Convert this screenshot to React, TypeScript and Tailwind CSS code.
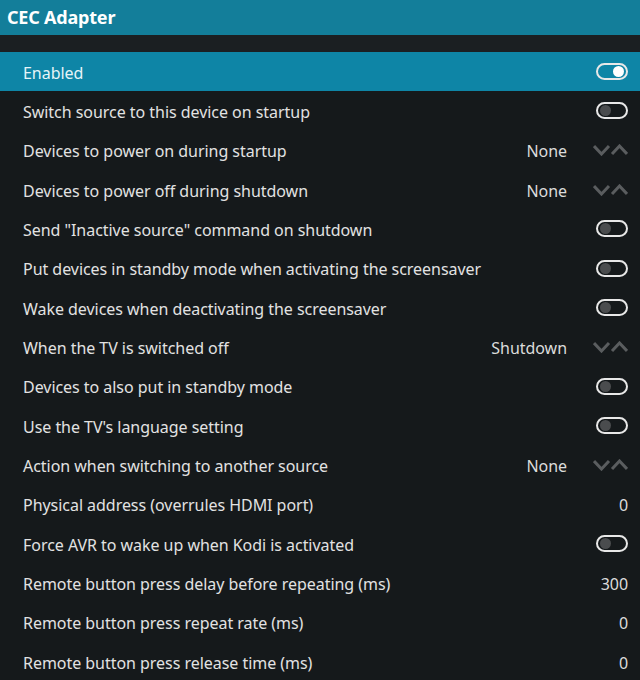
import React from 'react'

type Row = {
  label: string
  kind: 'toggle' | 'list' | 'value'
  on?: boolean
  value?: string
}

const rows: Row[] = [
  { label: 'Enabled', kind: 'toggle', on: true },
  { label: 'Switch source to this device on startup', kind: 'toggle' },
  { label: 'Devices to power on during startup', kind: 'list', value: 'None' },
  { label: 'Devices to power off during shutdown', kind: 'list', value: 'None' },
  { label: 'Send "Inactive source" command on shutdown', kind: 'toggle' },
  { label: 'Put devices in standby mode when activating the screensaver', kind: 'toggle' },
  { label: 'Wake devices when deactivating the screensaver', kind: 'toggle' },
  { label: 'When the TV is switched off', kind: 'list', value: 'Shutdown' },
  { label: 'Devices to also put in standby mode', kind: 'toggle' },
  { label: "Use the TV's language setting", kind: 'toggle' },
  { label: 'Action when switching to another source', kind: 'list', value: 'None' },
  { label: 'Physical address (overrules HDMI port)', kind: 'value', value: '0' },
  { label: 'Force AVR to wake up when Kodi is activated', kind: 'toggle' },
  { label: 'Remote button press delay before repeating (ms)', kind: 'value', value: '300' },
  { label: 'Remote button press repeat rate (ms)', kind: 'value', value: '0' },
  { label: 'Remote button press release time (ms)', kind: 'value', value: '0' },
]

function Toggle({ on }: { on?: boolean }) {
  return (
    <div className="w-[32px] h-[17px] rounded-full border-2 border-[#e8e8e8] flex items-center px-[2px]">
      <div
        className={
          on
            ? 'ml-auto w-[11px] h-[11px] rounded-full bg-white'
            : 'w-[11px] h-[11px] rounded-full bg-[#4a4c4e]'
        }
      />
    </div>
  )
}

function Spinner() {
  return (
    <svg width="35" height="12" viewBox="0 0 35 12" className="text-[#5a5d5f]">
      <path d="M1 2 L8.5 10 L16 2" fill="none" stroke="currentColor" strokeWidth="3" />
      <path d="M19 10 L26.5 2 L34 10" fill="none" stroke="currentColor" strokeWidth="3" />
    </svg>
  )
}

function SettingRow({ row, selected }: { row: Row; selected: boolean }) {
  return (
    <div
      className={
        'h-[39.33px] flex items-center pl-[23px] pr-[12px] ' +
        (selected ? 'bg-[#0e85a6] text-[#e6f4f8]' : 'text-[#e2e2e2]')
      }
    >
      <span className="flex-1 whitespace-nowrap pt-[2px]">{row.label}</span>
      {row.kind === 'toggle' && <Toggle on={row.on} />}
      {row.kind === 'list' && (
        <div className="flex items-center gap-[26px]">
          <span className="text-[#dcdcdc] pt-[2px]">{row.value}</span>
          <Spinner />
        </div>
      )}
      {row.kind === 'value' && <span className="text-[#dcdcdc] pt-[2px]">{row.value}</span>}
    </div>
  )
}

export default function App() {
  return (
    <div
      className="w-[640px] h-[680px] overflow-hidden bg-[#15191b] text-[16px] tracking-[-0.04px]"
      style={{ fontFamily: '"Noto Sans", sans-serif' }}
    >
      <div className="h-[35px] bg-[#137e9a] flex items-center px-[7px]">
        <h1 className="text-white font-bold text-[18px] tracking-[-0.2px]">CEC Adapter</h1>
      </div>
      <div className="h-[17px] bg-[#1b1f22]" />
      <div className="flex flex-col">
        {rows.map((r, i) => (
          <SettingRow key={r.label} row={r} selected={i === 0} />
        ))}
      </div>
    </div>
  )
}
